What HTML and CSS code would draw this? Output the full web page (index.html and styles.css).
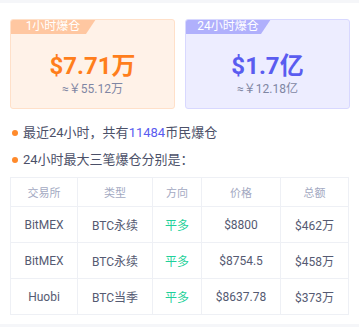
FILE: index.html
```html
<!DOCTYPE html>
<html lang="zh">
<head>
<meta charset="utf-8">
<link rel="stylesheet" href="styles.css">
</head>
<body>
<div class="panel">
  <div class="cards">
    <div class="card card-orange">
      <div class="tab">1小时爆仓</div>
      <div class="big">$7.71万</div>
      <div class="sub">≈￥55.12万</div>
    </div>
    <div class="card card-blue">
      <div class="tab">24小时爆仓</div>
      <div class="big">$1.7亿</div>
      <div class="sub">≈￥12.18亿</div>
    </div>
  </div>
  <ul class="notes">
    <li><span class="dot"></span>最近24小时，共有<span class="hl">11484</span>币民爆仓</li>
    <li><span class="dot"></span>24小时最大三笔爆仓分别是：</li>
  </ul>
  <table class="tbl">
    <colgroup>
      <col class="c1"><col class="c2"><col class="c3"><col class="c4"><col class="c5">
    </colgroup>
    <thead>
      <tr><th>交易所</th><th>类型</th><th>方向</th><th>价格</th><th>总额</th></tr>
    </thead>
    <tbody>
      <tr><td>BitMEX</td><td>BTC永续</td><td class="green">平多</td><td>$8800</td><td>$462万</td></tr>
      <tr><td>BitMEX</td><td>BTC永续</td><td class="green">平多</td><td>$8754.5</td><td>$458万</td></tr>
      <tr><td>Huobi</td><td>BTC当季</td><td class="green">平多</td><td>$8637.78</td><td>$373万</td></tr>
    </tbody>
  </table>
</div>
</body>
</html>
```
FILE: styles.css
```css
html, body {
  margin: 0;
  padding: 0;
  background: #f5f6f9;
  font-family: Roboto, "Noto Sans CJK SC", sans-serif;
  color: #4b5068;
}
.panel {
  margin-top: 3px;
  background: #ffffff;
  padding: 16px 9px 9px 10px;
}
.cards {
  display: flex;
  gap: 10px;
}
.card {
  flex: 1;
  height: 90px;
  box-sizing: border-box;
  border: 1px solid;
  border-radius: 3px;
  display: flex;
  flex-direction: column;
  align-items: center;
  overflow: hidden;
}
.card-orange {
  background: #fff2e8;
  border-color: #ffe0c9;
}
.card-blue {
  background: #ededff;
  border-color: #d8d8ff;
}
.tab {
  align-self: flex-start;
  width: 86px;
  height: 15px;
  margin: -1px 0 0 -1px;
  line-height: 15px;
  font-size: 12px;
  color: #ffffff;
  text-align: center;
  clip-path: polygon(0 0, 100% 0, calc(100% - 10px) 100%, 0 100%);
}
.card-orange .tab { background: #ffc7a1; }
.card-blue .tab { background: #b0b0fc; }
.big {
  margin-top: 18px;
  font-size: 24px;
  font-weight: 700;
  line-height: 28px;
}
.card-orange .big { color: #ff7e1c; }
.card-blue .big { color: #5a5cf0; }
.sub {
  margin-top: 1px;
  font-size: 12px;
  line-height: 16px;
  color: #7f86a3;
}
.notes {
  list-style: none;
  margin: 10px 0 0 0;
  padding: 0;
}
.notes li {
  display: flex;
  align-items: center;
  font-size: 13px;
  line-height: 27px;
  color: #4b5068;
}
.dot {
  width: 6px;
  height: 6px;
  border-radius: 50%;
  background: #ff8a2b;
  margin: 0 5px 0 2px;
}
.hl { color: #5a5cf0; }
.tbl {
  margin-top: 4px;
  width: 338px;
  border-collapse: collapse;
  table-layout: fixed;
}
.c1 { width: 67px; }
.c2 { width: 75px; }
.c3 { width: 49px; }
.c4 { width: 79px; }
.c5 { width: 68px; }
.tbl th, .tbl td {
  border: 1px solid #eef0f5;
  text-align: center;
  padding: 0;
}
.tbl th {
  height: 28px;
  font-size: 11px;
  font-weight: 400;
  color: #a3a9c2;
}
.tbl td {
  height: 35px;
  font-size: 12px;
  color: #555a72;
}
.tbl td.green { color: #1fd19a; }
```
